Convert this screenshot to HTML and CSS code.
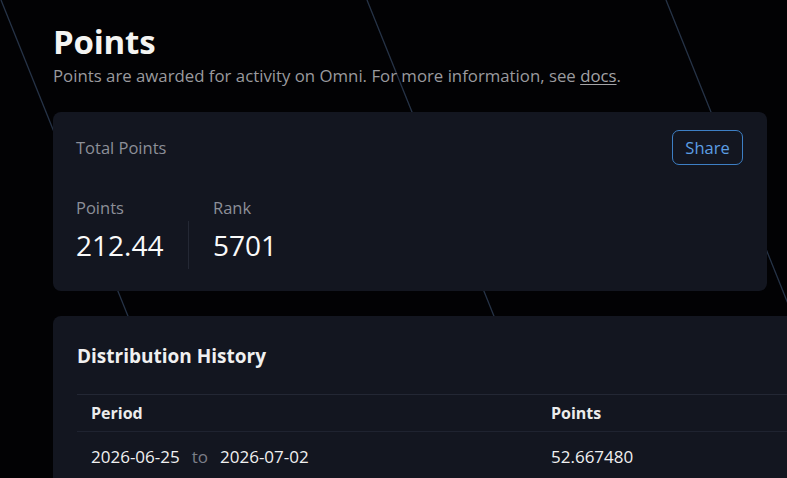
FILE: index.html
```html
<!DOCTYPE html>
<html lang="en">
<head>
    <meta charset="UTF-8">
    <meta name="viewport" content="width=device-width, initial-scale=1.0">
    <title>Points</title>
    <link rel="stylesheet" href="styles.css">
</head>
<body>
    <!-- background streaks -->
    <svg class="bg-lines" width="787" height="478" viewBox="0 0 787 478">
        <line x1="1" y1="0" x2="193" y2="478" />
        <line x1="367" y1="0" x2="559" y2="478" />
        <line x1="666" y1="0" x2="858" y2="478" />
    </svg>

    <div class="page">
        <h1 class="title">Points</h1>
        <p class="subtitle">Points are awarded for activity on Omni. For more information, see <a href="#">docs</a>.</p>

        <div class="card total">
            <div class="total-head">
                <span class="total-label">Total Points</span>
                <button class="share-btn">Share</button>
            </div>
            <div class="stats">
                <div class="stat stat-first">
                    <div class="stat-label">Points</div>
                    <div class="stat-value">212.44</div>
                </div>
                <span class="stat-divider"></span>
                <div class="stat">
                    <div class="stat-label">Rank</div>
                    <div class="stat-value">5701</div>
                </div>
            </div>
        </div>

        <div class="card history">
            <h2 class="history-title">Distribution History</h2>
            <table class="history-table">
                <thead>
                    <tr><th class="col-period">Period</th><th>Points</th></tr>
                </thead>
                <tbody>
                    <tr>
                        <td>2026-06-25<span class="to">to</span>2026-07-02</td>
                        <td>52.667480</td>
                    </tr>
                </tbody>
            </table>
        </div>
    </div>
</body>
</html>
```

FILE: styles.css
```css
*{margin: 0; padding: 0; box-sizing: border-box;}
html, body {height: 100%;}
body {background-color: #020204; color: #f2f2f2; font-family: "Open Sans", "Noto Sans", sans-serif; overflow: hidden; position: relative;}

.bg-lines {position: absolute; left: 0; top: 0; z-index: 0;}
.bg-lines line {stroke: #263347; stroke-width: 1.3;}

.page {position: relative; z-index: 1; padding: 22px 0 0 53px; width: 787px; overflow: hidden; height: 478px;}
.title {font-size: 33px; font-weight: 700; line-height: 40px; color: #f4f4f2; letter-spacing: -0.2px;}
.subtitle {font-size: 16.8px; line-height: 22px; color: #9a9a9e; margin-top: 3px; white-space: nowrap;}
.subtitle a {color: #a4a4a8; text-decoration: underline; text-underline-offset: 2px;}

.card {background-color: #131620; border-radius: 8px;}
.total {width: 714px; height: 179px; margin-top: 25px; padding: 18px 24px 0 23px;}
.total-head {display: flex; justify-content: space-between; align-items: center; height: 35px;}
.total-label {font-size: 16.5px; color: #8c8f98;}
.share-btn {background: none; border: 1px solid #3d7fc4; color: #5c9ee4; border-radius: 7px; font-family: inherit; font-size: 16.5px; width: 71px; height: 35px;}

.stats {display: flex; margin-top: 30px;}
.stat-first {width: 112px;}
.stat-divider {align-self: flex-end; width: 1px; height: 48px; margin: 0 24px -4px 0; background-color: #242834;}
.stat-label {font-size: 16.5px; color: #8c8f98; line-height: 26px;}
.stat-value {font-size: 28px; line-height: 40px; color: #fafafa; margin-top: 4px;}

.history {width: 760px; margin-top: 25px; padding: 24px 0 0 24px; height: 200px;}
.history-title {font-size: 19px; font-weight: 700; color: #f0f0f0; line-height: 32px;}
.history-table {border-collapse: collapse; margin-top: 22px; width: 736px; font-size: 16px;}
.history-table th {text-align: left; font-weight: 700; color: #ececec; padding: 7px 14px; line-height: 22px; border-top: 1px solid #232734; border-bottom: 1px solid #1f2330;}
.history-table .col-period {width: 460px;}
.history-table td {padding: 14px 14px; line-height: 22px; font-size: 17px; color: #f0f0f0;}
.to {color: #7b7e88; margin: 0 12px;}
```
